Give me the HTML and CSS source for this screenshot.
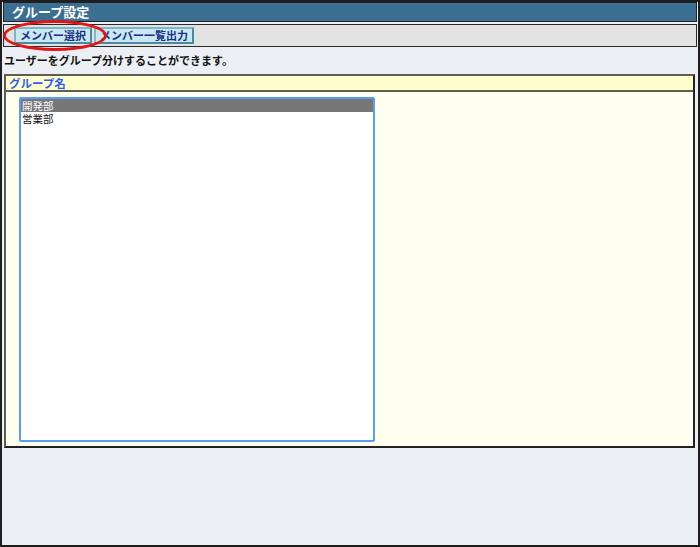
FILE: index.html
```html
<!DOCTYPE html>
<html lang="ja">
<head>
<meta charset="utf-8">
<link rel="stylesheet" href="styles.css">
</head>
<body>
<div class="frame">
  <div class="titlebar">グループ設定</div>
  <div class="toolbar">
    <span class="btn">メンバー選択</span>
    <span class="btn">メンバー一覧出力</span>
    <span class="ring"></span>
  </div>
  <div class="desc">ユーザーをグループ分けすることができます。</div>
  <div class="panel">
    <div class="panel-head">グループ名</div>
    <div class="panel-body">
      <div class="listbox">
        <div class="opt selected">開発部</div>
        <div class="opt">営業部</div>
      </div>
    </div>
  </div>
</div>
</body>
</html>
```
FILE: styles.css
```css
html, body {
  margin: 0;
  padding: 0;
}
body {
  font-family: "Noto Sans CJK JP", "Noto Sans", sans-serif;
}
.frame {
  width: 700px;
  height: 547px;
  box-sizing: border-box;
  border: 2px solid #1e1e1e;
  background: #ecf0f4;
  padding: 0 1px 0 1px;
  display: flex;
  flex-direction: column;
}
.titlebar {
  background: #3b6f91;
  border: 1px solid #222;
  color: #fff;
  font-weight: bold;
  font-size: 13px;
  line-height: 18px;
  padding-left: 8px;
  height: 18px;
}
.toolbar {
  position: relative;
  margin-top: 2px;
  background: #e3e3e3;
  border: 1px solid #2a2a2a;
  height: 21px;
  display: flex;
  align-items: center;
  gap: 2px;
  padding-left: 10px;
}
.btn {
  background: #c9e8f1;
  border: 2px solid #4a8aa0;
  border-top-color: #7fb6c8;
  border-left-color: #7fb6c8;
  color: #1a2f8a;
  font-weight: bold;
  font-size: 11px;
  line-height: 13px;
  padding: 0 4px;
}
.ring {
  position: absolute;
  left: -1px;
  top: -5px;
  width: 98px;
  height: 25px;
  border: 3px solid #e41414;
  border-radius: 50%;
}
.desc {
  font-size: 11px;
  color: #111;
  font-weight: bold;
  margin-top: 6px;
  padding-left: 1px;
  line-height: 15px;
}
.panel {
  margin: 6px 2px 0 1px;
  border: 2px solid #5e5e55;
  border-right-color: #222;
  border-bottom-color: #222;
  background: #fffff0;
}
.panel-head {
  background: #ffffcc;
  color: #2f5cf6;
  font-size: 11.5px;
  font-weight: bold;
  line-height: 14px;
  padding-left: 3px;
  border-bottom: 2px solid #5e5e55;
}
.panel-body {
  padding: 5px 0 4px 13px;
  height: 345px;
}
.listbox {
  width: 352px;
  height: 341px;
  background: #fff;
  border: 2px solid #5a9cf8;
  border-radius: 2px;
}
.opt {
  font-size: 10.5px;
  line-height: 13px;
  color: #111;
  padding-left: 1px;
}
.opt.selected {
  background: #777;
  color: #fff;
}
```
